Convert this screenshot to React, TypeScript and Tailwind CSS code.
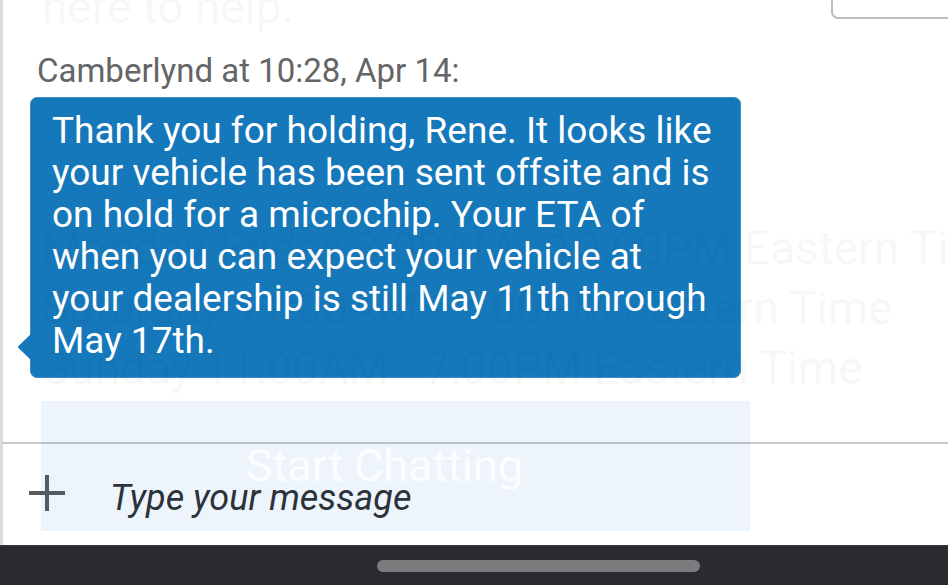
const bubbleLines = [
  "Thank you for holding, Rene. It looks like",
  "your vehicle has been sent offsite and is",
  "on hold for a microchip. Your ETA of",
  "when you can expect your vehicle at",
  "your dealership is still May 11th through",
  "May 17th.",
];

const hours = [
  "Monday-Friday 8:00AM - 10:00PM Eastern Time",
  "Saturday 11:00AM - 7:00PM Eastern Time",
  "Sunday 11:00AM - 7:00PM Eastern Time",
];

// faded page that shows through from the previous screen
const GhostLayer = () => (
  <div className="pointer-events-none absolute inset-0">
    <div className="absolute left-[42px] top-[-23px] whitespace-nowrap text-[46px] leading-[60px] text-black/[0.05]">
      here to help.
    </div>
    <div className="absolute left-[42px] top-[218px] flex flex-col whitespace-nowrap text-[46px] leading-[60px] text-black/[0.055]">
      {hours.map((h) => (
        <div key={h}>{h}</div>
      ))}
    </div>
    <div className="absolute left-[41px] top-[401px] flex h-[130px] w-[709px] items-center justify-center bg-[rgba(30,110,200,0.075)] pr-[22px]">
      <span className="text-[45px] text-white/80">Start Chatting</span>
    </div>
  </div>
);

export default function App() {
  return (
    <div className="relative h-[585px] w-[948px] overflow-hidden bg-white font-['Roboto',sans-serif]">
      <div className="flex h-[545px] flex-col border-l-[3px] border-[#dcdcdc]">
        <section className="flex h-[442px] flex-col">
          <div className="flex h-[20px] justify-end">
            <div className="h-[19px] w-[117px] rounded-bl-[7px] border-b-2 border-l-2 border-[#bdbdbd]" />
          </div>
          <div className="mt-[31px] pl-[34px] text-[33px] leading-[40px] text-[#656565]">
            Camberlynd at 10:28, Apr 14:
          </div>
          <div className="relative ml-[27px] mt-[6px] h-[281px] w-[711px] rounded-[7px] border border-[#3d8cc5] bg-[#1578bb] pl-[21px] pt-[12px]">
            <svg
              className="absolute left-[-14px] top-[235px]"
              width="15"
              height="28"
              viewBox="0 0 15 28"
            >
              <path d="M15 0 L2 12.5 Q0 14 2 15.5 L15 28 Z" fill="#1578bb" />
            </svg>
            <div className="text-[37px] leading-[42px] text-white">
              {bubbleLines.map((l) => (
                <div key={l} className="whitespace-nowrap">
                  {l}
                </div>
              ))}
            </div>
          </div>
        </section>
        <div className="flex flex-1 items-center border-t-2 border-[#c9c9c9] pl-[24px]">
          <svg width="40" height="40" viewBox="0 0 40 40" className="mt-[-4px]">
            <path d="M20 2 V38 M2 20 H38" stroke="#5a5a5a" strokeWidth="4" />
          </svg>
          <span className="ml-[43px] mt-[6px] text-[36px] italic text-[#2e2e2e]">
            Type your message
          </span>
        </div>
      </div>
      <div className="flex h-[40px] items-center border-t border-[#3a3b3f] bg-[#2a2b2f] pl-[377px]">
        <div className="h-[12px] w-[323px] rounded-full bg-[#7b7b7e]" />
      </div>
      <GhostLayer />
    </div>
  );
}
